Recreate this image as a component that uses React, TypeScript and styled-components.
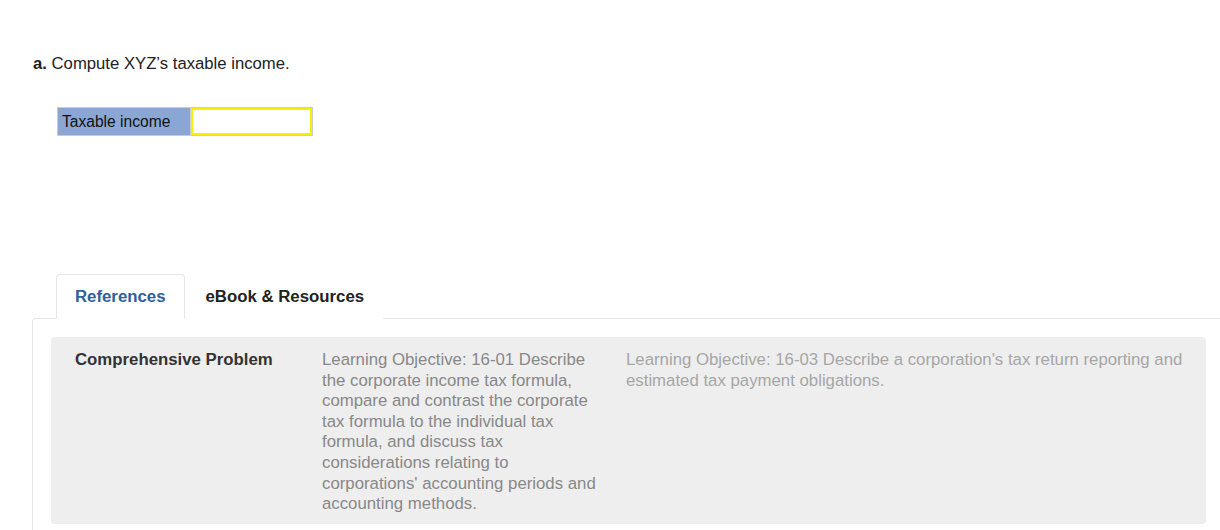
import styled, { createGlobalStyle } from "styled-components";

const GlobalStyle = createGlobalStyle`
  html, body {
    margin: 0;
    padding: 0;
    background: #ffffff;
    overflow: hidden;
  }
  body {
    font-family: "Liberation Sans", Arial, Helvetica, sans-serif;
    color: #333333;
  }
`;

function App() {
  return (
    <>
      <GlobalStyle />
      <Page>
        <Question>
          <b>a.</b> Compute XYZ’s taxable income.
        </Question>

        <AnswerTable>
          <tbody>
            <tr>
              <LabelCell>Taxable income</LabelCell>
              <InputCell>
                <AnswerInput type="text" />
              </InputCell>
            </tr>
          </tbody>
        </AnswerTable>

        <Tabs>
          <TabList>
            <Tab active>References</Tab>
            <Tab>eBook &amp; Resources</Tab>
          </TabList>
          <Panel>
            <RefBox>
              <RefTitle>Comprehensive Problem</RefTitle>
              <Objective>
                Learning Objective: 16-01 Describe the corporate income tax
                formula, compare and contrast the corporate tax formula to the
                individual tax formula, and discuss tax considerations relating
                to corporations' accounting periods and accounting methods.
              </Objective>
              <Objective faded>
                Learning Objective: 16-03 Describe a corporation's tax return
                reporting and estimated tax payment obligations.
              </Objective>
            </RefBox>
          </Panel>
        </Tabs>
      </Page>
    </>
  );
}

export default App;

const Page = styled.div`
  padding-top: 54px;
  width: 1220px;
  height: 530px;
  box-sizing: border-box;
  overflow: hidden;
`;

const Question = styled.p`
  margin: 0 0 0 33px;
  font-size: 16.7px;
  line-height: 20px;
  color: #222222;

  b {
    font-weight: bold;
  }
`;

const AnswerTable = styled.table`
  margin: 33px 0 0 57px;
  border-collapse: collapse;
  border: 1px solid #cccccc;
`;

const LabelCell = styled.td`
  background: #8aa6d3;
  color: #111111;
  font-size: 15.6px;
  width: 133px;
  height: 27px;
  padding: 0 0 0 4px;
  box-sizing: border-box;
  border: 1px solid #cccccc;
`;

const InputCell = styled.td`
  padding: 0;
  width: 121px;
  border: 1px solid #cccccc;
`;

const AnswerInput = styled.input`
  display: block;
  width: 121px;
  height: 27px;
  box-sizing: border-box;
  border: 2px solid #f8f000;
  outline: none;
  margin: 0;
  background: #ffffff;
`;

const Tabs = styled.div`
  margin: 138px -4px 0 32px;
`;

const TabList = styled.div`
  display: flex;
  padding-left: 24px;
  position: relative;
  z-index: 1;
  margin-bottom: -1px;
`;

const Tab = styled.div<{ active?: boolean }>`
  box-sizing: border-box;
  height: 45px;
  padding: 0 18px 0 ${(p) => (p.active ? "18px" : "20px")};
  display: flex;
  align-items: center;
  font-size: 16.8px;
  font-weight: bold;
  color: ${(p) => (p.active ? "#30609a" : "#222222")};
  background: #ffffff;
  border: 1px solid ${(p) => (p.active ? "#e6e6e6" : "transparent")};
  border-bottom: 1px solid ${(p) => (p.active ? "#ffffff" : "transparent")};
  border-radius: 4px 4px 0 0;
`;

const Panel = styled.div`
  border: 1px solid #e6e6e6;
  border-right: none;
  border-bottom: none;
  border-radius: 4px 0 0 0;
  padding: 18px 18px 20px 18px;
`;

const RefBox = styled.div`
  display: grid;
  grid-template-columns: 247px 304px 1fr;
  background: #eeeeee;
  border-radius: 4px;
  padding: 13px 10px 9px 24px;
  font-size: 16.8px;
  line-height: 20.6px;
`;

const RefTitle = styled.div`
  font-weight: bold;
  color: #333333;
`;

const Objective = styled.div<{ faded?: boolean }>`
  color: ${(p) => (p.faded ? "#a6a6a6" : "#888888")};
  padding-right: ${(p) => (p.faded ? "0" : "22px")};
`;
